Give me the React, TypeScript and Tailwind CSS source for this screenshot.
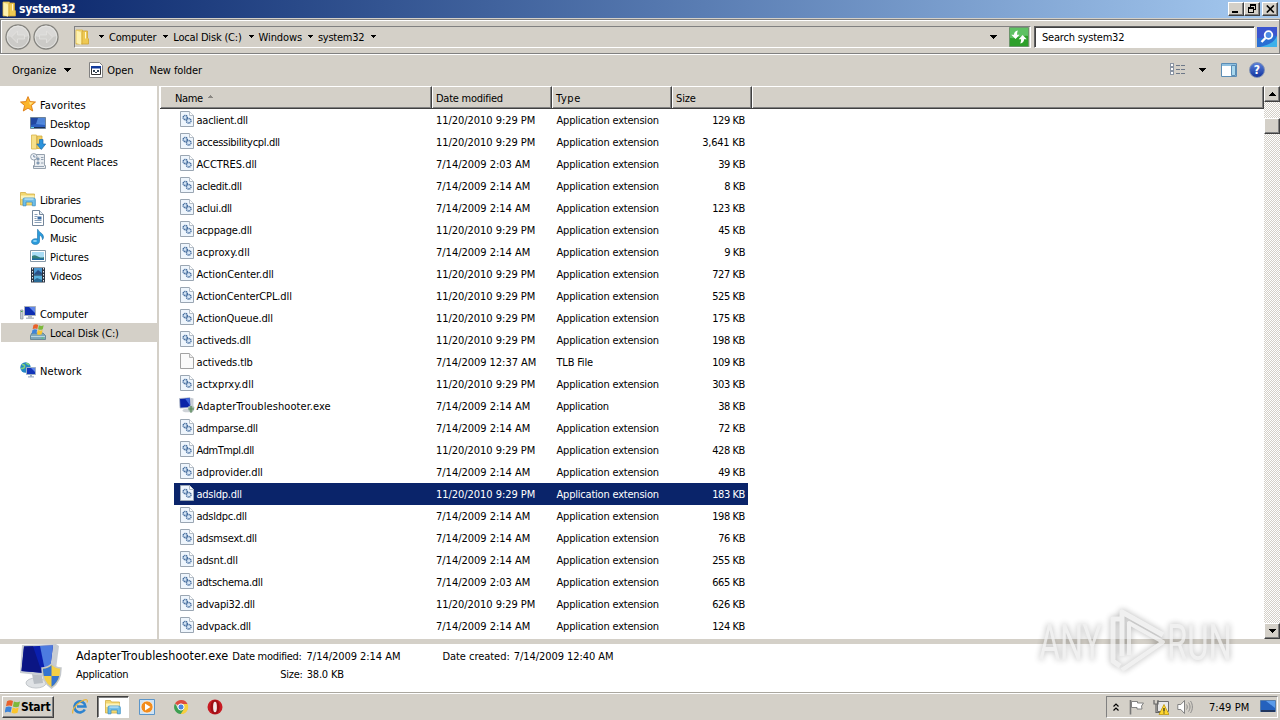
import { useLayoutEffect, useRef } from 'react'
import type { ReactNode } from 'react'
import { clsx } from 'clsx'

const ROWS: [name: string, nameWidth: number, date: string, size: string, sizeWidth: number][] = [
  ['aaclient.dll', 51, '11/20/2010 9:29 PM', '129 KB', 32],
  ['accessibilitycpl.dll', 83, '11/20/2010 9:29 PM', '3,641 KB', 42],
  ['ACCTRES.dll', 60, '7/14/2009 2:03 AM', '39 KB', 26],
  ['acledit.dll', 45, '7/14/2009 2:14 AM', '8 KB', 20],
  ['aclui.dll', 35, '7/14/2009 2:14 AM', '123 KB', 32],
  ['acppage.dll', 55, '11/20/2010 9:29 PM', '45 KB', 26],
  ['acproxy.dll', 53, '7/14/2009 2:14 AM', '9 KB', 20],
  ['ActionCenter.dll', 77, '11/20/2010 9:29 PM', '727 KB', 32],
  ['ActionCenterCPL.dll', 95, '11/20/2010 9:29 PM', '525 KB', 32],
  ['ActionQueue.dll', 76, '11/20/2010 9:29 PM', '175 KB', 32],
  ['activeds.dll', 54, '11/20/2010 9:29 PM', '198 KB', 32],
  ['activeds.tlb', 56, '7/14/2009 12:37 AM', '109 KB', 32],
  ['actxprxy.dll', 57, '11/20/2010 9:29 PM', '303 KB', 32],
  ['AdapterTroubleshooter.exe', 134, '7/14/2009 2:14 AM', '38 KB', 26],
  ['admparse.dll', 61, '7/14/2009 2:14 AM', '72 KB', 26],
  ['AdmTmpl.dll', 57, '11/20/2010 9:29 PM', '428 KB', 32],
  ['adprovider.dll', 66, '7/14/2009 2:14 AM', '49 KB', 26],
  ['adsldp.dll', 45, '11/20/2010 9:29 PM', '183 KB', 32],
  ['adsldpc.dll', 50, '7/14/2009 2:14 AM', '198 KB', 32],
  ['adsmsext.dll', 60, '7/14/2009 2:14 AM', '76 KB', 26],
  ['adsnt.dll', 41, '7/14/2009 2:14 AM', '255 KB', 32],
  ['adtschema.dll', 66, '7/14/2009 2:03 AM', '665 KB', 32],
  ['advapi32.dll', 58, '11/20/2010 9:29 PM', '626 KB', 32],
  ['advpack.dll', 54, '7/14/2009 2:14 AM', '124 KB', 32]
]

const DATE_WIDTHS: Record<string, number> = {
  '11/20/2010 9:29 PM': 99,
  '7/14/2009 2:03 AM': 94,
  '7/14/2009 2:14 AM': 94,
  '7/14/2009 12:37 AM': 100
}

const TYPES: Record<string, [label: string, width: number]> = {
  dll: ['Application extension', 102],
  exe: ['Application', 52],
  tlb: ['TLB File', 36]
}

const SELECTED = 'adsldp.dll'

/** A run of text whose letter spacing is tuned so that it fills `w` pixels. */
function T({ children, w, flush, className }: { children: string; w: number; flush?: boolean; className?: string }) {
  const ref = useRef<HTMLSpanElement>(null)

  useLayoutEffect(() => {
    const el = ref.current
    if (!el) return
    el.style.letterSpacing = '0px'
    const natural = el.getBoundingClientRect().width
    el.style.letterSpacing = `${(w + 0.3 - natural) / children.length}px`
  }, [children, w])

  return (
    <span ref={ref} className={clsx('shrink-0 whitespace-pre', !flush && 'pt-[2px]', className)}>
      {children}
    </span>
  )
}

function Caret({ className }: { className?: string }) {
  return (
    <svg width="7" height="4" viewBox="0 0 7 4" className={clsx('shrink-0', className)} shapeRendering="crispEdges">
      <path d="M0 0h7L3.5 4z" fill="#000" />
    </svg>
  )
}

function SmallCaret({ className }: { className?: string }) {
  return (
    <svg width="5" height="3" viewBox="0 0 5 3" className={clsx('shrink-0', className)} shapeRendering="crispEdges">
      <path d="M0 0h5v1H0zM1 1h3v1H1zM2 2h1v1H2z" fill="#000" />
    </svg>
  )
}

function Icon({ children, size = 16, className }: { children: ReactNode; size?: number; className?: string }) {
  return (
    <svg width={size} height={size} viewBox="0 0 16 16" className={clsx('shrink-0', className)}>
      {children}
    </svg>
  )
}

function FolderIcon({ className }: { className?: string }) {
  return (
    <Icon className={className}>
      <path d="M2 1h6.500v14H2z" fill="#f5dc7c" stroke="#d9b23f" strokeWidth=".8" />
      <path d="M8 2h5.500v7l1 .8V15H8z" fill="#eec952" stroke="#cfa435" strokeWidth=".8" />
      <path d="M2.500 1.500l4.500 2v12.300L2.500 14z" fill="#fdf1b0" />
      <path d="M11.500 3v6.500" stroke="#fff6cf" />
    </Icon>
  )
}

function DllIcon() {
  return (
    <Icon>
      <path d="M1.500.5h9l4 4v11h-13z" fill="#eef5fc" stroke="#9aa6b3" />
      <path d="M10.500.5v4h4" fill="#fff" stroke="#b3bcc6" />
      <circle cx="6.200" cy="6.500" r="2.100" fill="#d5e5f5" stroke="#41699b" strokeWidth="1.500" strokeDasharray="1.100 .5" />
      <circle cx="9.700" cy="9.800" r="2.300" fill="#d5e5f5" stroke="#41699b" strokeWidth="1.500" strokeDasharray="1.100 .5" />
    </Icon>
  )
}

function BlankIcon() {
  return (
    <Icon>
      <path d="M1.500.5h9l4 4v11h-13z" fill="#fbfbfb" stroke="#a3a3a3" />
      <path d="M10.500.5v4h4" fill="#eee" stroke="#b5b5b5" />
    </Icon>
  )
}

function ExeIcon() {
  return (
    <Icon>
      <path d="M.5 1.500L11 .7l1 9.800-11 .6z" fill="#0b24a8" stroke="#b8bfc8" strokeWidth=".8" />
      <path d="M6 1.500l4.500-.3.700 7.500z" fill="#3f67db" />
      <path d="M11.500.8l3 .7v9.500l-2-.5z" fill="#c7ccd4" />
      <ellipse cx="8" cy="13.500" rx="4.500" ry="1.800" fill="#cfd3d8" />
      <path d="M9 10l3-1.500 3.200 1.500c0 3-1 4.800-3.200 5.800C9.800 14.800 9 13 9 10z" fill="#9eb4a4" stroke="#c5d0d0" strokeWidth=".5" />
      <path d="M12 9v6.500M9.500 12h5.500" stroke="#5b8b5b" strokeWidth="1.200" />
    </Icon>
  )
}

function StarIcon() {
  return (
    <Icon>
      <path d="M8 .6l2.100 5 5.400.4-4.100 3.500 1.300 5.500L8 12.100 3.300 15l1.300-5.500L.5 6l5.400-.4z" fill="#fbb52c" stroke="#dd7b14" strokeWidth=".9" />
      <path d="M8 2.800l1.400 3.500 3.800.3L10 9z" fill="#ffe68a" />
    </Icon>
  )
}

function DesktopIcon() {
  return (
    <Icon>
      <path d="M.5 2.500h15v11H.5z" fill="#2c5fc0" stroke="#6e8399" />
      <path d="M1 3h14v4L1 10z" fill="#2046a0" />
      <path d="M8 3h7v7L6 9z" fill="#5b93e6" opacity=".8" />
      <path d="M1 12h14v1H1z" fill="#1b2f52" />
      <path d="M1 12h3v1H1z" fill="#5fd0ea" />
    </Icon>
  )
}

function DownloadsIcon() {
  return (
    <Icon>
      <path d="M1.500 1h5v14h-5z" fill="#f7e08a" stroke="#d9b54c" strokeWidth=".8" />
      <path d="M7 2h5v12.500H7z" fill="#f1cf62" stroke="#d0a940" strokeWidth=".8" />
      <path d="M9.500 5.500h3.500v4.500h2.700L11.300 15.500 6.800 10h2.700z" fill="#2b93dc" stroke="#1c6cad" strokeWidth=".7" />
    </Icon>
  )
}

function RecentIcon() {
  return (
    <Icon>
      <path d="M4.500 1.500h10v11h1v3h-12v-3h1z" fill="#e9edf1" stroke="#8b97a4" strokeWidth=".9" />
      <path d="M7 5h2v2H7zM11 4.500h2.500M11 6.500h2.500M7 9h2v2H7zM11 10h2.500M3 13.500h11" fill="#8fb5d8" stroke="#7c8da1" strokeWidth=".8" />
      <circle cx="3.800" cy="3.800" r="3.200" fill="#f3f6f9" stroke="#8996a5" strokeWidth=".9" />
      <path d="M3.800 2v2h1.700" stroke="#55708f" fill="none" strokeWidth=".8" />
    </Icon>
  )
}

function LibraryIcon() {
  return (
    <Icon>
      <path d="M.5 1.500h5l1 1.500h8v11H.5z" fill="#f3d870" stroke="#d2ad45" strokeWidth=".8" />
      <path d="M1 4.500h13.500V8H1z" fill="#fdf3b9" />
      <path d="M3 14.800V8.500c0-1 .6-1.500 1.500-1.500h9c1 0 1.800.5 1.800 1.500v6.300h-3v-3.800H6v3.800z" fill="#71bfe9" stroke="#3c8fc4" strokeWidth=".8" />
      <path d="M4.500 8h9" stroke="#d5effc" />
    </Icon>
  )
}

function DocumentIcon() {
  return (
    <Icon>
      <path d="M2.500.5h7l4 4v11h-11z" fill="#fff" stroke="#75879b" />
      <path d="M9.500.5v4h4" fill="#e4ebf2" stroke="#75879b" />
      <path d="M4.500 4.500h3M4.500 6.500h3M4.500 8.500h2M4.500 10.500h7M4.500 12.500h7" stroke="#8aa0b8" />
      <path d="M7.500 6.500h4v3h-4z" fill="#3b6da5" />
    </Icon>
  )
}

function MusicIcon() {
  return (
    <Icon>
      <path d="M8 .5c.5 3 5.500 3.500 5.500 7.500 0 1-.4 2-1 2.700C12.500 8 11 6.800 9.500 6.300v6c0 1.800-1.600 3.200-4 3.200s-4-1-4-2.800 1.800-3 4-3c.9 0 1.500.1 2 .4V.5z" fill="#2a9bdc" stroke="#1a6fa8" strokeWidth=".6" />
      <ellipse cx="5" cy="12" rx="2" ry="1" fill="#8fd4f5" />
    </Icon>
  )
}

function PictureIcon() {
  return (
    <Icon>
      <path d="M.5 2.500h15v11H.5z" fill="#fff" stroke="#8799a8" />
      <path d="M2 4h12v8H2z" fill="#a9dcf5" />
      <path d="M2 8c3-2 5 0 7 1s4 .5 5 0v3H2z" fill="#357f79" />
      <path d="M2 10.500h12V12H2z" fill="#1e6aa5" />
    </Icon>
  )
}

function VideoIcon() {
  return (
    <Icon>
      <path d="M1 .5h14v15H1z" fill="#2b3442" />
      <path d="M4 1h8v6.500H4z" fill="#4a96cf" />
      <path d="M4 8.500h8V15H4z" fill="#59b0dd" />
      <path d="M5 6l3-3 4 3v1.500H4z" fill="#284f86" />
      <path d="M4 13l3-2 5 2v2H4z" fill="#2a6a96" />
      <path d="M2.500 1v14M13.500 1v14" stroke="#e8edf2" strokeDasharray="1.500 1.500" />
    </Icon>
  )
}

function ComputerIcon() {
  return (
    <Icon>
      <path d="M.5 5h2.500v9H.5z" fill="#c5cbd2" stroke="#88919b" strokeWidth=".7" />
      <path d="M1 6.500h1.500" stroke="#3fa84a" />
      <path d="M4.500 1.500h11v9h-11z" fill="#0f2fb2" stroke="#aab2bb" />
      <path d="M9 2h6v6z" fill="#5f86ea" />
      <path d="M8 11h4v1.500h2V14H6v-1.500h2z" fill="#b7bec6" />
    </Icon>
  )
}

function Flag() {
  return (
    <>
      <path d="M2.200 2.300C4 1.200 5.800 1.300 7.400 2.200L6.500 6.600C5 5.800 3.100 5.800 1.300 6.800z" fill="#e9612b" />
      <path d="M8.200 2.500c1.700.9 3.500 1 5.300 0l-1 4.500c-1.700.9-3.500.8-5.200-.1z" fill="#7db93b" />
      <path d="M1.100 7.700c1.800-1 3.500-1 5.200-.1l-1 4.500c-1.600-.8-3.300-.8-5.200.2z" fill="#3d84d9" />
      <path d="M7.100 7.900c1.700.9 3.400 1 5.200 0l-1 4.500c-1.800.9-3.500.9-5.200 0z" fill="#fbc52d" />
    </>
  )
}

function DriveIcon() {
  return (
    <Icon>
      <path d="M2 9h11l2.500 2.500v4H.5v-4z" fill="#7fa6b8" stroke="#5a7c8d" strokeWidth=".8" />
      <path d="M1 12.500h14" stroke="#b9d6e2" />
      <path d="M11.500 14h2" stroke="#50d060" />
      <g transform="translate(1.500 -1) scale(.9)">
        <Flag />
      </g>
    </Icon>
  )
}

function NetworkIcon() {
  return (
    <Icon>
      <circle cx="5.500" cy="5.500" r="5.200" fill="#2585c4" />
      <path d="M2 2.500c2 0 3 1 2.500 2.500S2 6.500 1 6.500M6 1c1 1 2.500 1 3.500 2" stroke="#7ed07a" strokeWidth="1.600" fill="none" />
      <path d="M6.500 5.500h9v7h-9z" fill="#1334b9" stroke="#9fb0c6" />
      <path d="M11 6h4v4z" fill="#5f86ea" />
      <path d="M10 13h2v1.200h2v1.300H8v-1.300h2z" fill="#9fb0c6" />
    </Icon>
  )
}

function fileIcon(name: string) {
  if (name.endsWith('.exe')) return <ExeIcon />
  if (name.endsWith('.tlb')) return <BlankIcon />
  return <DllIcon />
}

const RAISED =
  'border border-t-white border-l-white border-r-[#404040] border-b-[#404040] bg-[#d4d0c8] shadow-[inset_-1px_-1px_0_#808080]'

function TitleBar() {
  return (
    <header className="flex h-[18px] shrink-0 items-center bg-linear-to-r from-[#0a246a] to-[#a6caf0] pl-[1px] pr-[2px]">
      <FolderIcon />
      <T flush w={56} className="ml-[2px] text-[12px] font-bold text-white">
        system32
      </T>
      <div className="ml-auto flex h-[14px]">
        <div className={clsx('flex w-4 items-end justify-center pb-[2px]', RAISED)}>
          <div className="mr-[2px] h-[2px] w-[6px] bg-black" />
        </div>
        <div className={clsx('flex w-4 items-center justify-center', RAISED)}>
          <svg width="10" height="10" viewBox="0 0 10 10" shapeRendering="crispEdges">
            <path d="M3 0h6v6H7V5h1V2H4v1H3zM1 3h6v6H1zM2 5v3h4V5z" fill="#000" fillRule="evenodd" />
          </svg>
        </div>
        <div className={clsx('ml-[2px] flex w-4 items-center justify-center', RAISED)}>
          <svg width="9" height="8" viewBox="0 0 9 8">
            <path d="M.8.5l7 7M7.800.5l-7 7" stroke="#000" strokeWidth="1.600" />
          </svg>
        </div>
      </div>
    </header>
  )
}

function NavButton({ flip }: { flip?: boolean }) {
  return (
    <svg width="26" height="26" viewBox="0 0 26 26" className={clsx('shrink-0', flip && '-scale-x-100')}>
      <circle cx="13" cy="13" r="12" fill="#cbcac7" stroke="#85847f" strokeWidth="1.300" />
      <path d="M2.500 12a10.500 10.500 0 0 1 21 0c-5 2-15 2-21 0z" fill="#dad9d7" />
      <circle cx="13" cy="13" r="10.800" fill="none" stroke="#e9e8e6" strokeWidth=".8" />
      <path d="M12.500 7L6.500 13l6 6v-4h7v-4h-7z" fill="#d3d2cf" stroke="#e3e2df" strokeWidth=".8" />
    </svg>
  )
}

function AddressBar() {
  return (
    <div className="mt-px flex h-[35px] shrink-0 items-center border border-[#808080] pl-1 shadow-[inset_1px_1px_0_#fff,0_1px_0_#fff]">
      <div className="flex w-[69px] gap-[2px]">
        <NavButton />
        <NavButton flip />
      </div>
      <div className="flex h-[22px] w-[957px] items-center border border-t-[#808080] border-r-white border-b-white border-l-[#808080]">
        <FolderIcon className="-ml-px" />
        <SmallCaret className="ml-[9px]" />
        <T w={47} className="ml-[5px]">
          Computer
        </T>
        <SmallCaret className="ml-[7px]" />
        <T w={68} className="ml-[5px]">
          Local Disk (C:)
        </T>
        <SmallCaret className="ml-[7px]" />
        <T w={43} className="ml-[5px]">
          Windows
        </T>
        <SmallCaret className="ml-[6px]" />
        <T w={46} className="ml-[5px]">
          system32
        </T>
        <SmallCaret className="ml-[7px]" />
        <Caret className="ml-auto mr-[12px]" />
        <RefreshIcon />
      </div>
      <div className="ml-[3px] flex h-[22px] w-[221px] items-center border border-t-[#606060] border-r-white border-b-white border-l-[#606060] bg-white pl-[7px] shadow-[inset_1px_1px_0_#404040]">
        <T w={82}>Search system32</T>
      </div>
      <svg width="20" height="20" viewBox="0 0 20 20" className="ml-[2px] shrink-0">
        <path d="M0 0h20v20H0z" fill="#2a6fd3" />
        <path d="M0 0h20v9C12 7 6 12 0 11z" fill="#3b55cf" />
        <path d="M20 9v11H3c8-2 14-4 17-11z" fill="#3fb1ea" />
        <circle cx="11.500" cy="8" r="3.800" fill="#4d8be4" stroke="#fff" strokeWidth="1.800" />
        <path d="M8.500 11L4.500 15" stroke="#fff" strokeWidth="2.400" />
      </svg>
    </div>
  )
}

function RefreshIcon() {
  return (
    <svg width="20" height="20" viewBox="0 0 20 20" className="mr-px shrink-0">
      <path d="M.5.5h19v19H.5z" fill="#2ea02b" stroke="#6b946b" />
      <path d="M1 1h18v8C13 8 7 12 1 11z" fill="#5fc163" />
      <path d="M8.800 3.500c-2.500.4-3.800 2-3.800 4.300H2.300L6.500 12l4-4.200H8c0-1.500.2-2.700.8-4.300z" fill="#fff" />
      <path d="M11.300 16.500c2.500-.4 3.800-2 3.800-4.300h2.700L13.600 8l-4 4.200h2.500c0 1.500-.2 2.700-.8 4.300z" fill="#fff" />
    </svg>
  )
}

function Toolbar() {
  return (
    <div className="flex h-[31px] shrink-0 items-center pl-[12px]">
      <T w={44}>Organize</T>
      <Caret className="ml-[8px]" />
      <Icon className="ml-[17px]">
        <path d="M1.500.5h10l3 3v12h-13z" fill="#fff" stroke="#808080" />
        <path d="M3.500 4.500h9v8h-9z" fill="#fff" stroke="#333" />
        <path d="M3 4h10v2.500H3z" fill="#123a9c" />
        <path d="M5 8h2v2H5zM9 8h2v2H9zM7 10h2v1H7z" fill="#345" />
      </Icon>
      <T w={26} className="ml-[3px]">
        Open
      </T>
      <T w={52} className="ml-[16px]">
        New folder
      </T>
      <div className="ml-auto flex items-center pr-[15px]">
        <svg width="16" height="13" viewBox="0 0 16 13" shapeRendering="crispEdges">
          <path d="M.5.5h3v3h-3zM.5 4.500h3v3h-3zM.5 8.500h3v3h-3z" fill="#fff" stroke="#8a94a3" />
          <path d="M6 2.500h4M11 2.500h4M6 6.500h4M11 6.500h4M6 10.500h4M11 10.500h4" stroke="#6d7888" />
        </svg>
        <Caret className="ml-[13px]" />
        <svg width="16" height="14" viewBox="0 0 16 14" className="ml-[15px]">
          <path d="M.5.5h15v13H.5z" fill="#fff" stroke="#5b8db5" />
          <path d="M1 1h14v2H1z" fill="#8fc0e0" />
          <path d="M10.500 2.500h4v10h-4z" fill="#a9d8ee" stroke="#5b8db5" />
        </svg>
        <div className="ml-[12px] flex h-4 w-4 items-center justify-center rounded-full border border-[#7d8fb5] bg-linear-to-b from-[#5b7fd8] to-[#1433a0] text-[12px] font-bold text-white">
          ?
        </div>
      </div>
    </div>
  )
}

function NavItem({
  icon,
  label,
  w,
  child,
  active
}: {
  icon: ReactNode
  label: string
  w: number
  child?: boolean
  active?: boolean
}) {
  return (
    <div
      className={clsx(
        'ml-px flex h-[19px] items-center gap-[4px]',
        child ? 'pl-[29px]' : 'pl-[19px]',
        active && 'bg-[#d4d0c8]'
      )}
    >
      <div className="pb-px">{icon}</div>
      <T w={w}>{label}</T>
    </div>
  )
}

function NavPane() {
  return (
    <nav className="flex w-[157px] shrink-0 flex-col gap-[19px] bg-white pt-[9px]">
      <div>
        <NavItem icon={<StarIcon />} label="Favorites" w={45.5} />
        <NavItem child icon={<DesktopIcon />} label="Desktop" w={39.5} />
        <NavItem child icon={<DownloadsIcon />} label="Downloads" w={52.5} />
        <NavItem child icon={<RecentIcon />} label="Recent Places" w={67.5} />
      </div>
      <div>
        <NavItem icon={<LibraryIcon />} label="Libraries" w={40.5} />
        <NavItem child icon={<DocumentIcon />} label="Documents" w={53.5} />
        <NavItem child icon={<MusicIcon />} label="Music" w={26.5} />
        <NavItem child icon={<PictureIcon />} label="Pictures" w={38.5} />
        <NavItem child icon={<VideoIcon />} label="Videos" w={31.5} />
      </div>
      <div>
        <NavItem icon={<ComputerIcon />} label="Computer" w={47.5} />
        <NavItem child active icon={<DriveIcon />} label="Local Disk (C:)" w={68.5} />
      </div>
      <div>
        <NavItem icon={<NetworkIcon />} label="Network" w={41.5} />
      </div>
    </nav>
  )
}

const HEAD_CELL =
  'flex shrink-0 items-center border-r border-r-[#404040] border-b border-b-[#404040] border-t border-t-white shadow-[inset_1px_0_0_#fff,inset_-1px_-1px_0_#808080]'

function FileList() {
  return (
    <main className="flex min-w-0 flex-1 flex-col bg-white">
      <div className="flex h-[23px] shrink-0 bg-[#d4d0c8]">
        <div className={clsx(HEAD_CELL, 'w-[272px] pl-[15px]')}>
          <T w={27.5}>Name</T>
          <svg width="5" height="3" viewBox="0 0 5 3" className="mb-[3px] ml-[5px]" shapeRendering="crispEdges">
            <path d="M2 0h1v1H2zM1 1h3v1H1zM0 2h5v1H0z" fill="#8b8883" />
          </svg>
        </div>
        <div className={clsx(HEAD_CELL, 'w-[120px] pl-[4px]')}>
          <T w={66.5}>Date modified</T>
        </div>
        <div className={clsx(HEAD_CELL, 'w-[120px] pl-[4px]')}>
          <T w={24.5}>Type</T>
        </div>
        <div className={clsx(HEAD_CELL, 'w-[80px] pl-[4px]')}>
          <T w={19.5}>Size</T>
        </div>
        <div className={clsx(HEAD_CELL, 'w-auto flex-1')} />
      </div>
      <div className="pl-[14px]">
        {ROWS.map(([name, nameWidth, date, size, sizeWidth]) => {
          const [type, typeWidth] = TYPES[name.slice(-3)]
          return (
            <div
              key={name}
              className={clsx('flex h-[22px] w-[574px] items-center pl-[5px] pr-[3px]', name === SELECTED && 'bg-[#0a246a] text-white')}
            >
              <div className="flex w-[257px] items-center gap-px">
                <div className="pb-[2px]">{fileIcon(name)}</div>
                <T w={nameWidth + 0.5} className="pl-[.5px]">
                  {name}
                </T>
              </div>
              <div className="flex w-[120px]">
                <T w={DATE_WIDTHS[date]}>{date}</T>
              </div>
              <T w={typeWidth + 0.5} className="pl-[.5px]">
                {type}
              </T>
              <T w={sizeWidth + 0.5} className="ml-auto">
                {size}
              </T>
            </div>
          )
        })}
      </div>
    </main>
  )
}

function ScrollBar() {
  return (
    <div className="flex w-4 shrink-0 flex-col bg-[#eae8e4] bg-[repeating-conic-gradient(#d4d0c8_0_25%,#fff_0_50%)] bg-[length:2px_2px]">
      <div className={clsx('flex h-4 items-center justify-center', RAISED)}>
        <Caret className="rotate-180" />
      </div>
      <div className={clsx('mt-[16px] h-4', RAISED)} />
      <div className={clsx('mt-auto flex h-4 items-center justify-center', RAISED)}>
        <Caret />
      </div>
    </div>
  )
}

function DetailsPane() {
  return (
    <div className="flex h-[48px] shrink-0 bg-white pl-[18px]">
      <svg width="46" height="46" viewBox="0 0 46 46" className="shrink-0">
        <ellipse cx="18" cy="39" rx="10" ry="5" fill="#dfe2e5" stroke="#c2c6ca" />
        <path d="M14 30l10 1 1 8-9 1z" fill="#b9bec4" />
        <path d="M4 1l34-1 3 2-4 31-35-4z" fill="#c8cdd3" />
        <path d="M6 2.500l29-1-3.500 28L3.500 27z" fill="#0a1fae" />
        <path d="M22 2l13-.5-3.500 28-4-.4z" fill="#4c7be0" />
        <path d="M6 2.500l9-.3 9 26.500-20.500-1.700z" fill="#0b1584" />
        <path d="M24 24c4 0 7-1.500 9.500-4 2.500 2.500 5 4 9.500 4 0 8-3 16-9.500 20C27 40 24 32 24 24z" fill="#f4cf45" stroke="#c4c8cc" strokeWidth="1.500" />
        <path d="M25 24.800c3.500 0 6.200-1.200 8.500-3.500V32h-7.700c-.5-2-.8-4.500-.8-7.200zM33.500 32h7.700c-1.200 4.500-3.700 8.200-7.700 10.800z" fill="#3574cf" />
      </svg>
      <div className="ml-[12px] flex flex-col pt-[3px]">
        <div className="flex h-[18px] items-center">
          <T flush w={152} className="text-[12.500px]">
            AdapterTroubleshooter.exe
          </T>
          <T w={69} className="ml-[4px]">
            Date modified:
          </T>
          <T w={93.5} className="ml-[5px]">
            7/14/2009 2:14 AM
          </T>
          <T w={67} className="ml-[42px]">
            Date created:
          </T>
          <T w={99.5} className="ml-[4px]">
            7/14/2009 12:40 AM
          </T>
        </div>
        <div className="flex h-[18px] items-center">
          <T w={52}>Application</T>
          <T w={22} className="ml-[152px]">
            Size:
          </T>
          <T w={37} className="ml-[4px]">
            38.0 KB
          </T>
        </div>
      </div>
    </div>
  )
}

function Taskbar() {
  return (
    <footer className="flex h-[28px] shrink-0 items-center border-t border-[#aaa79f] bg-[#d4d0c8] px-[2px] shadow-[inset_0_1px_0_#fff]">
      <div className={clsx('flex h-[22px] w-[52px] items-center pl-[2px]', RAISED)}>
        <Icon>
          <g transform="translate(-.5 -.5) scale(1.150)">
            <Flag />
          </g>
        </Icon>
        <T flush w={29} className="text-[12px] font-bold">
          Start
        </T>
      </div>
      <Icon className="ml-[18px]">
        <path d="M12.800 10.500A5.500 5.500 0 1 1 13.400 7.500H5" stroke="#2d83cf" strokeWidth="2.600" fill="none" />
        <path d="M1 14.500C-.5 12 3 6 9 2.500s7-1.500 6 1" stroke="#eab53a" strokeWidth="1.200" fill="none" />
      </Icon>
      <div className="ml-[9px] flex h-[22px] w-[32px] items-center justify-center border border-t-[#404040] border-r-white border-b-white border-l-[#404040] bg-white shadow-[inset_1px_1px_0_#808080]">
        <LibraryIcon />
      </div>
      <Icon className="ml-[10px]">
        <path d="M.5.5h15v15H.5z" fill="#cfe3f4" stroke="#5b95c9" />
        <circle cx="8" cy="8" r="6" fill="#f28c1c" stroke="#fff" strokeWidth=".6" />
        <path d="M6 4.500v7L11.500 8z" fill="#fff" />
      </Icon>
      <Icon className="ml-[18px]">
        <path d="M8 8L2 4.500A7 7 0 0 1 14.500 5z" fill="#dd4b3e" />
        <path d="M8 8h7a7 7 0 0 1-7.500 7L11 9z" fill="#f7cf40" />
        <path d="M14.500 5H8l3 5-3.300 5A7 7 0 0 0 14.500 5z" fill="#f7cf40" />
        <path d="M2 4.500A7 7 0 0 0 7.700 15L11 10 5 9.500z" fill="#3d9f51" />
        <circle cx="8" cy="8" r="3.100" fill="#4a86e0" stroke="#fff" />
      </Icon>
      <Icon className="ml-[18px]">
        <circle cx="8" cy="8" r="7.500" fill="#c81a22" />
        <ellipse cx="8" cy="8" rx="4.600" ry="7" fill="#9c0e15" />
        <ellipse cx="8" cy="8" rx="1.900" ry="5.300" fill="#f3e9ea" />
      </Icon>
      <div className="ml-auto flex h-[22px] w-[172px] items-center border border-t-[#808080] border-r-white border-b-white border-l-[#808080] pl-[6px]">
        <svg width="6" height="8" viewBox="0 0 6 8">
          <path d="M.5 3.500L3 1l2.500 2.500M.5 7.500L3 5l2.500 2.500" stroke="#000" strokeWidth="1.200" fill="none" />
        </svg>
        <Icon className="ml-[10px]">
          <path d="M1.500 1v14.500" stroke="#777" strokeWidth="1.600" />
          <path d="M2.500 2.500h6v1.500h6L12.500 7l.5 3H8V8.500H2.500z" fill="#fff" stroke="#777" strokeWidth=".9" />
        </Icon>
        <Icon className="ml-[8px]">
          <path d="M4.500 2.500h11v10h-11z" fill="#e9e9e9" stroke="#6e6e6e" />
          <path d="M1 1v4h4V1M3 5v8.500h4" fill="none" stroke="#666" strokeWidth="1.200" />
          <path d="M11 5.500l5 10H6z" fill="#ffd62e" stroke="#b88f00" strokeWidth=".7" />
          <path d="M11 9v3.500M11 13.500v1" stroke="#222" strokeWidth="1.200" />
        </Icon>
        <Icon className="ml-[8px]">
          <path d="M.8 5.500h3L7.500 1.500v13L3.800 10.500h-3z" fill="#fff" stroke="#777" strokeWidth=".9" />
          <path d="M9.500 5.500c1 1.500 1 3.500 0 5M11.500 3.500c2 2.500 2 6.500 0 9M13.500 2c2.500 3.500 2.500 8.500 0 12" stroke="#858585" fill="none" strokeWidth=".9" />
        </Icon>
        <T w={40} className="ml-[16px]">
          7:49 PM
        </T>
        <svg width="16" height="13" viewBox="0 0 16 13" className="ml-auto mr-px shrink-0">
          <path d="M.5.500h15v11H.5z" fill="#2461bd" stroke="#567ba8" />
          <path d="M6 1h9v7z" fill="#5a9bea" />
          <path d="M1 10h14v2H1z" fill="#20365e" />
        </svg>
      </div>
    </footer>
  )
}

function Watermark() {
  return (
    <svg
      width="230"
      height="80"
      viewBox="0 0 230 80"
      className="pointer-events-none absolute left-[1030px] top-[604px] overflow-visible opacity-75 drop-shadow-[0_0_3px_rgba(0,0,0,0.4)]"
    >
      <g fill="#ececec" className="font-['Roboto',sans-serif] text-[50px] leading-none">
        <text x="9" y="56" textLength="63" lengthAdjust="spacingAndGlyphs">
          ANY
        </text>
        <text x="137" y="56" textLength="65" lengthAdjust="spacingAndGlyphs">
          RUN
        </text>
      </g>
      <g fill="none" stroke="#ececec" strokeWidth="5" strokeLinejoin="round">
        <path d="M90 15h-7v42l7 5" />
        <path d="M92 52V8l41 23" />
        <path d="M92 66l41-28-34-19v32" strokeWidth="4" />
      </g>
    </svg>
  )
}

export default function App() {
  return (
    <div className="relative flex h-[720px] w-[1280px] flex-col overflow-hidden bg-[#d4d0c8] font-['DejaVu_Sans_Condensed','DejaVu_Sans',sans-serif] text-[11px] leading-[14px] text-black">
      <TitleBar />
      <AddressBar />
      <Toolbar />
      <div className="mt-px flex h-[553px] shrink-0">
        <NavPane />
        <div className="w-[3px] shrink-0 border-r border-white bg-[#d4d0c8]" />
        <FileList />
        <ScrollBar />
      </div>
      <div className="h-[5px] shrink-0" />
      <DetailsPane />
      <Taskbar />
      <Watermark />
    </div>
  )
}
